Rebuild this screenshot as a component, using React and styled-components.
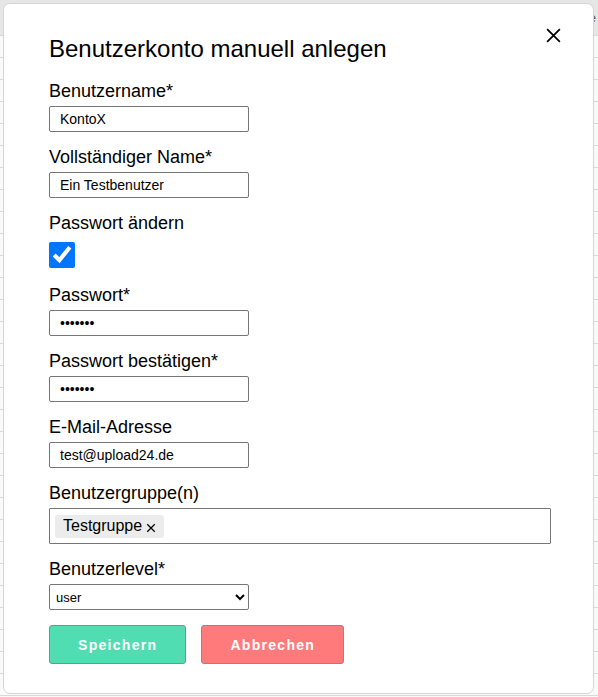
import React, { useState } from "react";
import styled, { createGlobalStyle } from "styled-components";

const GlobalStyle = createGlobalStyle`
  html, body {
    margin: 0;
    padding: 0;
    background: #ffffff;
    font-family: "Liberation Sans", Arial, sans-serif;
  }
`;

const Page = styled.div`
  width: 598px;
  height: 697px;
  overflow: hidden;
  position: relative;
  background: #ffffff;
`;

const TableHeader = styled.div`
  height: 35px;
  background: #ebebeb;
  border-bottom: 1px solid #dddddd;
  display: flex;
  justify-content: flex-end;
  align-items: center;
  padding-right: 2px;
  font-size: 13px;
  color: #555;
`;

const TableRow = styled.div`
  height: 21px;
  border-bottom: 1px solid #dddddd;
`;

const Overlay = styled.div`
  position: absolute;
  inset: 0;
  background: rgba(0, 0, 0, 0.02);
`;

const Modal = styled.div`
  position: absolute;
  top: 3px;
  left: 3px;
  width: 591px;
  height: 691px;
  box-sizing: border-box;
  background: #ffffff;
  border: 1px solid #d6d6d6;
  border-radius: 7px;
  padding: 31px 45px 0 45px;
`;

const Title = styled.h2`
  margin: 0 0 18px 0;
  font-size: 24px;
  line-height: 28px;
  font-weight: normal;
  color: #000;
`;

const CloseButton = styled.button`
  position: absolute;
  top: 20px;
  right: 29px;
  width: 22px;
  height: 22px;
  padding: 0;
  border: none;
  background: none;
  display: flex;
  align-items: center;
  justify-content: center;
  cursor: pointer;
`;

const Group = styled.div`
  margin-bottom: ${(p) => p.$gap ?? 15}px;
`;

const Label = styled.label`
  display: block;
  font-size: 18px;
  line-height: 21px;
  color: #000;
  margin-bottom: ${(p) => p.$gap ?? 4}px;
`;

const TextInput = styled.input`
  display: block;
  box-sizing: border-box;
  width: 200px;
  height: 26px;
  margin: 0;
  padding: 0 10px;
  border: 1px solid #767676;
  border-radius: 2px;
  font-family: "Liberation Sans", Arial, sans-serif;
  font-size: 14px;
  color: #000;
  background: #fff;
`;

const Checkbox = styled.input`
  display: block;
  width: 26px;
  height: 26px;
  margin: 0;
  accent-color: #0075ff;
`;

const MultiBox = styled.div`
  box-sizing: border-box;
  width: 502px;
  height: 36px;
  border: 1px solid #767676;
  border-radius: 1px;
  padding: 5px;
  display: flex;
  align-items: center;
  gap: 5px;
`;

const Chip = styled.span`
  display: inline-flex;
  align-items: center;
  height: 23px;
  padding: 0 8px 0 8px;
  background: #ececec;
  border-radius: 3px;
  font-size: 16px;
  color: #000;
  gap: 4px;
`;

const ChipRemove = styled.span`
  display: inline-flex;
  align-items: center;
  margin-top: 3px;
`;

const Select = styled.select`
  display: block;
  box-sizing: border-box;
  width: 200px;
  height: 26px;
  margin: 0;
  padding: 0 2px;
  border: 1px solid #767676;
  border-radius: 2px;
  font-family: "Liberation Sans", Arial, sans-serif;
  font-size: 13px;
  color: #000;
  background: #fff;
`;

const Actions = styled.div`
  display: flex;
  gap: 15px;
  margin-top: 15px;
`;

const Button = styled.button`
  box-sizing: border-box;
  height: 39px;
  padding: 0 28px;
  border: 1px solid #8a8a8a;
  border-radius: 3px;
  background: ${(p) => (p.$variant === "cancel" ? "#ff7b7b" : "#51ddb2")};
  color: #ffffff;
  font-family: "Liberation Sans", Arial, sans-serif;
  font-weight: bold;
  font-size: 14px;
  letter-spacing: 1.3px;
  cursor: pointer;
`;

const XIcon = ({ size = 16, stroke = 2 }) => (
  <svg width={size} height={size} viewBox="0 0 16 16">
    <path d="M2 2 L14 14 M14 2 L2 14" stroke="#000" strokeWidth={stroke} fill="none" />
  </svg>
);

export default function App() {
  const [checked, setChecked] = useState(true);
  const rows = Array.from({ length: 30 });

  return (
    <>
      <GlobalStyle />
      <Page>
        <TableHeader>e</TableHeader>
        {rows.map((_, i) => (
          <TableRow key={i} />
        ))}
        <Overlay />
        <Modal>
          <CloseButton aria-label="Schließen">
            <XIcon size={17} stroke={1.6} />
          </CloseButton>
          <Title>Benutzerkonto manuell anlegen</Title>

          <Group>
            <Label>Benutzername*</Label>
            <TextInput defaultValue="KontoX" />
          </Group>

          <Group>
            <Label>Vollständiger Name*</Label>
            <TextInput defaultValue="Ein Testbenutzer" />
          </Group>

          <Group $gap={17}>
            <Label $gap={8}>Passwort ändern</Label>
            <Checkbox
              type="checkbox"
              checked={checked}
              onChange={(e) => setChecked(e.target.checked)}
            />
          </Group>

          <Group>
            <Label>Passwort*</Label>
            <TextInput type="password" defaultValue="1234567" />
          </Group>

          <Group>
            <Label>Passwort bestätigen*</Label>
            <TextInput type="password" defaultValue="1234567" />
          </Group>

          <Group>
            <Label>E-Mail-Adresse</Label>
            <TextInput defaultValue="test@upload24.de" />
          </Group>

          <Group>
            <Label>Benutzergruppe(n)</Label>
            <MultiBox>
              <Chip>
                Testgruppe
                <ChipRemove>
                  <XIcon size={10} stroke={2} />
                </ChipRemove>
              </Chip>
            </MultiBox>
          </Group>

          <Group $gap={0}>
            <Label>Benutzerlevel*</Label>
            <Select defaultValue="user">
              <option value="user">user</option>
              <option value="admin">admin</option>
            </Select>
          </Group>

          <Actions>
            <Button>Speichern</Button>
            <Button $variant="cancel">Abbrechen</Button>
          </Actions>
        </Modal>
      </Page>
    </>
  );
}
